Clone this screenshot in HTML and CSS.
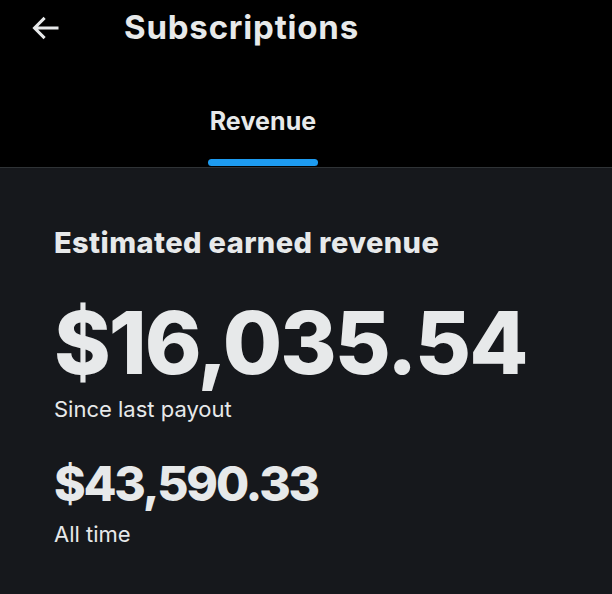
FILE: index.html
```html
<!DOCTYPE html>
<html lang="en">
<head>
	<meta charset="UTF-8">
	<meta name="viewport" content="width=device-width, initial-scale=1.0">
	<title>Subscriptions</title>
	<link rel="stylesheet" href="styles.css">
</head>
<body>
	<header class="top">
		<div class="titlebar">
			<a class="back" href="#">
				<svg viewBox="0 0 24 24" width="36" height="36"><path d="M7.414 13l5.043 5.04-1.414 1.42L3.586 12l7.457-7.46 1.414 1.42L7.414 11H21v2H7.414z" fill="currentColor"/></svg>
			</a>
			<h1>Subscriptions</h1>
		</div>
		<nav class="tabs">
			<a class="tab active" href="#">Revenue</a>
		</nav>
	</header>

	<main class="content">
		<h2>Estimated earned revenue</h2>
		<div class="amount big">$16,035.54</div>
		<div class="caption">Since last payout</div>
		<div class="amount">$43,590.33</div>
		<div class="caption">All time</div>
	</main>
</body>
</html>
```

FILE: styles.css
```css
body {
	margin: 0;
	background-color: #16181c;
	color: #e7e9ea;
	font-family: Inter, "Noto Sans", sans-serif;
}

/* Header */
.top {
	background-color: #000;
	border-bottom: 1px solid #2f3336;
}

.titlebar {
	display: flex;
	align-items: center;
	height: 56px;
	padding-left: 27px;
}

.back {
	display: flex;
	color: #e7e9ea;
	width: 97px;
}

.titlebar h1 {
	margin: 0 0 3px;
	font-size: 33px;
	font-weight: 700;
	letter-spacing: 0.8px;
}

.tabs {
	display: flex;
	padding-left: 208px;
	height: 111px;
}

.tab {
	display: flex;
	flex-direction: column;
	align-items: center;
	justify-content: flex-end;
	color: #e7e9ea;
	text-decoration: none;
	font-size: 25px;
	font-weight: 700;
	letter-spacing: 0.1px;
}

.tab.active:after {
	content: "";
	display: block;
	width: 110px;
	height: 7px;
	margin-top: 23px;
	margin-bottom: 1px;
	border-radius: 4px;
	background-color: #1d9bf0;
}

/* Content */
.content {
	padding: 57px 54px;
}

.content h2 {
	margin: 0;
	font-size: 29px;
	font-weight: 800;
	letter-spacing: 0.4px;
}

.amount {
	font-size: 48px;
	font-weight: 800;
	line-height: 1.2;
	margin-top: 34px;
	letter-spacing: -2.2px;
}

.amount.big {
	font-size: 86px;
	line-height: 1.15;
	margin-top: 34px;
	letter-spacing: -2px;
}

.caption {
	font-size: 22px;
	line-height: 1.1;
}

.amount + .caption {
	margin-top: 9px;
}

.amount.big + .caption {
	margin-top: 4px;
}
```
